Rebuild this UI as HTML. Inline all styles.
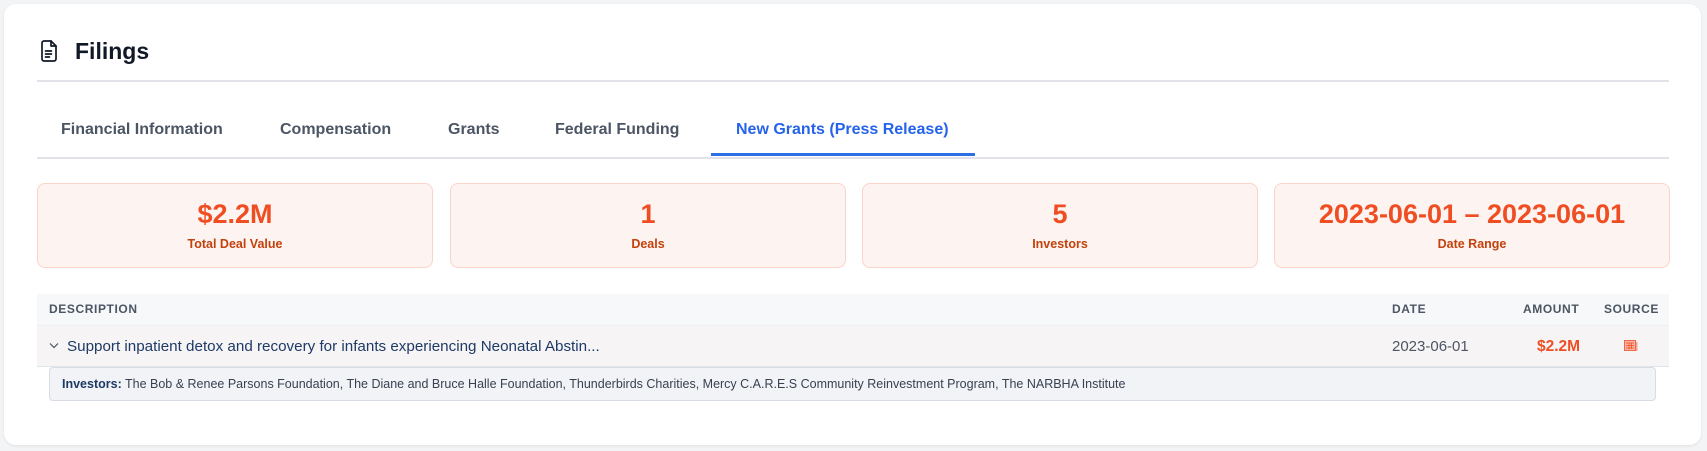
<!DOCTYPE html>
<html><head><meta charset="utf-8"><style>
*{box-sizing:border-box;margin:0;padding:0}
body{width:1707px;height:451px;background:#f3f4f6;font-family:"Liberation Sans",Arial,sans-serif;position:relative;overflow:hidden}
.card{position:absolute;left:4px;top:4px;width:1697px;height:441px;background:#fff;border-radius:12px;box-shadow:0 1px 3px rgba(0,0,0,.08)}
.a{position:absolute;white-space:nowrap}
.title{left:75px;top:38px;font-size:23px;font-weight:700;color:#111827}
.hl{left:37px;width:1632px;height:2px;background:#e2e3e8}
.tab{top:121px;font-size:16px;font-weight:700;color:#4b5563}
.stat{top:183px;height:85px;width:396px;background:#fdf3f1;border:1px solid #fbd3c8;border-radius:8px;text-align:center}
.stat .v{position:absolute;left:0;right:0;top:15px;font-size:27px;font-weight:700;color:#ef4e23}
.stat .l{position:absolute;left:0;right:0;top:53px;font-size:12.5px;font-weight:700;color:#c2410c}
.th{top:302px;font-size:12px;font-weight:700;color:#4b5563;letter-spacing:.6px}
</style></head><body>
<div class="card"></div>
<svg class="a" style="left:39px;top:40px" width="20" height="22" viewBox="0 0 20 22" fill="none" stroke="#111827" stroke-width="1.7" stroke-linejoin="round" stroke-linecap="round"><path d="M3 3a2 2 0 0 1 2-2h7l5 5v13a2 2 0 0 1-2 2H5a2 2 0 0 1-2-2z"/><path d="M12 1v5h5"/><path d="M6.5 11h6M6.5 14h6M6.5 17h4"/></svg>
<div class="a title">Filings</div>
<div class="a hl" style="top:80px"></div>
<div class="a tab" style="left:61px">Financial Information</div>
<div class="a tab" style="left:280px">Compensation</div>
<div class="a tab" style="left:448px">Grants</div>
<div class="a tab" style="left:555px">Federal Funding</div>
<div class="a tab" style="left:736px;color:#2563eb">New Grants (Press Release)</div>
<div class="a hl" style="top:157px"></div>
<div class="a" style="left:711px;top:153px;width:264px;height:3px;background:#2f6fe4"></div>
<div class="a stat" style="left:37px"><div class="v">$2.2M</div><div class="l">Total Deal Value</div></div>
<div class="a stat" style="left:450px"><div class="v">1</div><div class="l">Deals</div></div>
<div class="a stat" style="left:862px"><div class="v">5</div><div class="l">Investors</div></div>
<div class="a stat" style="left:1274px"><div class="v">2023-06-01 – 2023-06-01</div><div class="l">Date Range</div></div>
<div class="a" style="left:37px;top:294px;width:1632px;height:32px;background:#f7f8fa;border-bottom:1px solid #eceef1"></div>
<div class="a th" style="left:49px">DESCRIPTION</div>
<div class="a th" style="left:1392px">DATE</div>
<div class="a th" style="left:1523px">AMOUNT</div>
<div class="a th" style="left:1604px">SOURCE</div>
<div class="a" style="left:37px;top:326px;width:1632px;height:41px;background:#f6f4f5;border-bottom:1px solid #dfe3ea"></div>
<svg class="a" style="left:49px;top:342px" width="10" height="7" viewBox="0 0 10 7" fill="none" stroke="#4b5563" stroke-width="1.2"><path d="M1 1.5l4 4 4-4"/></svg>
<div class="a" style="left:67px;top:338px;font-size:15.2px;color:#1e3a66">Support inpatient detox and recovery for infants experiencing Neonatal Abstin...</div>
<div class="a" style="left:1392px;top:338px;font-size:15px;color:#4b5563">2023-06-01</div>
<div class="a" style="left:1537px;top:338px;font-size:15.5px;font-weight:700;color:#ef4e23">$2.2M</div>
<svg class="a" style="left:1624px;top:340px" width="14" height="12" viewBox="0 0 14 12"><rect x="0.5" y="0.5" width="11" height="10" fill="#f7b4a2" stroke="#ef6a46"/><rect x="12" y="2" width="1.5" height="9" fill="#f4a48e"/><path d="M2 3h8M2 5.5h8M2 8h8M5 3v6M7.5 3v6" stroke="#ef4e23" stroke-width=".8"/></svg>
<div class="a" style="left:49px;top:367px;width:1607px;height:34px;background:#f2f3f7;border:1px solid #d7dce5;border-radius:4px"></div>
<div class="a" style="left:62px;top:377px;font-size:12.5px;color:#374151"><b style="color:#1e3a66">Investors:</b> The Bob &amp; Renee Parsons Foundation, The Diane and Bruce Halle Foundation, Thunderbirds Charities, Mercy C.A.R.E.S Community Reinvestment Program, The NARBHA Institute</div>
</body></html>
